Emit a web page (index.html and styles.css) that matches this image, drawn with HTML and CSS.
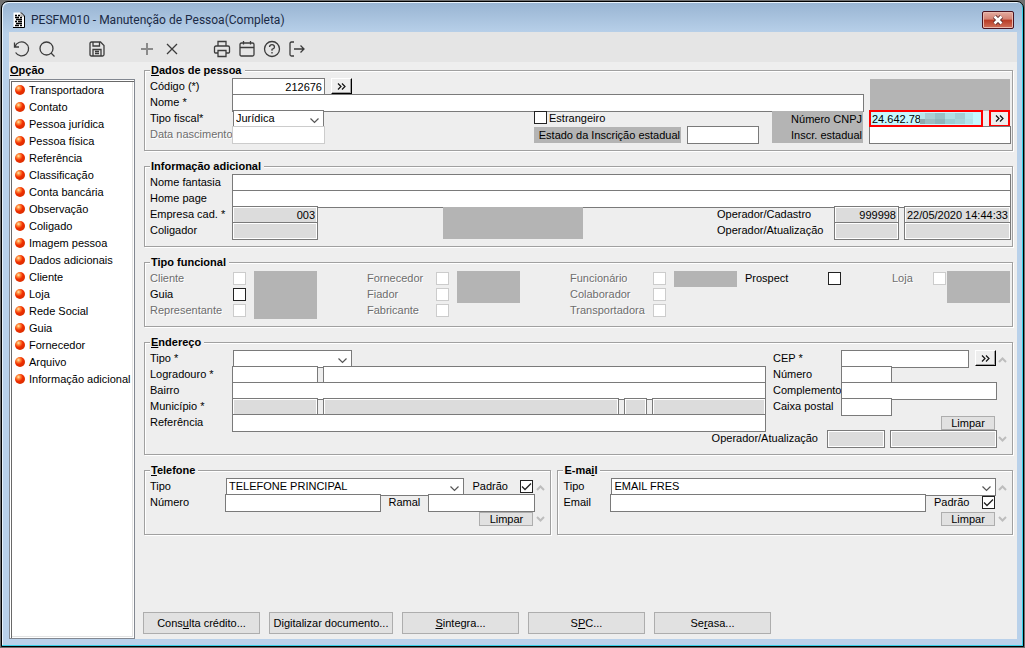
FILE: index.html
```html
<!DOCTYPE html>
<html lang="pt-BR">
<head>
    <meta charset="UTF-8">
    <meta name="viewport" content="width=device-width, initial-scale=1.0">
    <title>PESFM010 - Manutenção de Pessoa(Completa)</title>
    <link rel="stylesheet" href="styles.css">
</head>
<body>
    <div class="window">
        <header class="titlebar">
            <svg class="doc-icon" width="12" height="16" viewBox="0 0 12 16">
                <path d="M0.5 0.5H8L11.5 4V15.5H0.5Z" fill="#fff"/>
                <path d="M8 0.5V4H11.5" fill="none" stroke="#999"/>
                <path d="M0 15.5H11.5V4M8 0.5L11.5 4" fill="none" stroke="#000"/>
                <path d="M2 3.5H4M5 3.5H7M2 5.5H6M7 5.5H9M3 7.5H9M2 9.5H4M5 9.5H9M3 11.5H9M2 13.5H6M7 13.5H9" stroke="#000" stroke-width="1.4"/>
            </svg>
            <h1>PESFM010 - Manutenção de Pessoa(Completa)</h1>
            <button class="close" aria-label="Fechar">
                <svg width="12" height="10" viewBox="0 0 12 10">
                    <path d="M2.5 1.5L9.5 8.5M9.5 1.5L2.5 8.5" stroke="#5b2a2a" stroke-width="4.4"/>
                    <path d="M2.5 1.5L9.5 8.5M9.5 1.5L2.5 8.5" stroke="#fff" stroke-width="2.6"/>
                </svg>
            </button>
        </header>

        <div class="client">
            <nav class="toolbar">
                <button aria-label="Desfazer"><svg viewBox="0 0 18 18"><path d="M1.5 2.5V7H6M2 6.5A7 7 0 1 1 2.6 12.5"/></svg></button>
                <button aria-label="Pesquisar"><svg viewBox="0 0 18 18"><circle cx="8.5" cy="8.5" r="6.5"/><path d="M13 13L16.5 16.5"/></svg></button>
                <button class="space" aria-label="Salvar"><svg viewBox="0 0 18 18"><path d="M2 3.5Q2 2 3.5 2H12.5L16 5.5V14.5Q16 16 14.5 16H3.5Q2 16 2 14.5ZM5 2V6H11.5V2M5 16V9.5H13V16M7 11.5H11M7 13.5H11"/></svg></button>
                <button class="space off" aria-label="Adicionar"><svg viewBox="0 0 18 18"><path d="M9 3V15M3 9H15"/></svg></button>
                <button aria-label="Remover"><svg viewBox="0 0 18 18"><path d="M4 4L14 14M14 4L4 14"/></svg></button>
                <button class="space" aria-label="Imprimir"><svg viewBox="0 0 18 18"><path d="M5 6V1.5H13V6M5 13H2.5Q1.5 13 1.5 12V7.5Q1.5 6 3 6H15Q16.5 6 16.5 7.5V12Q16.5 13 15.5 13H13M5 10.5H13V16.5H5Z"/></svg></button>
                <button aria-label="Agenda"><svg viewBox="0 0 18 18"><path d="M2 4.5Q2 3 3.5 3H14.5Q16 3 16 4.5V14.5Q16 16 14.5 16H3.5Q2 16 2 14.5ZM2 7.5H16M5.5 1V4.5M12.5 1V4.5"/></svg></button>
                <button aria-label="Ajuda"><svg viewBox="0 0 18 18"><circle cx="9" cy="9" r="7.5"/><path d="M6.5 7Q6.8 4.7 9 4.7T11.5 7Q11.5 8.4 9 9.4V10.8M9 12V13.4"/></svg></button>
                <button aria-label="Sair"><svg viewBox="0 0 18 18"><path d="M6 2H3.5Q2 2 2 3.5V14.5Q2 16 3.5 16H6M6 9H16M12.5 5.5L16 9L12.5 12.5"/></svg></button>
            </nav>

            <div class="content">
                <aside class="sidebar">
                    <h2><u>O</u>pção</h2>
                    <ul class="options">
                        <li><a href="#">Transportadora</a></li>
                        <li><a href="#">Contato</a></li>
                        <li><a href="#">Pessoa jurídica</a></li>
                        <li><a href="#">Pessoa física</a></li>
                        <li><a href="#">Referência</a></li>
                        <li><a href="#">Classificação</a></li>
                        <li><a href="#">Conta bancária</a></li>
                        <li><a href="#">Observação</a></li>
                        <li><a href="#">Coligado</a></li>
                        <li><a href="#">Imagem pessoa</a></li>
                        <li><a href="#">Dados adicionais</a></li>
                        <li><a href="#">Cliente</a></li>
                        <li><a href="#">Loja</a></li>
                        <li><a href="#">Rede Social</a></li>
                        <li><a href="#">Guia</a></li>
                        <li><a href="#">Fornecedor</a></li>
                        <li><a href="#">Arquivo</a></li>
                        <li><a href="#">Informação adicional</a></li>
                    </ul>
                </aside>

                <form class="form">
                    <fieldset>
                        <legend><u>D</u>ados de pessoa</legend>
                        <div class="columns">
                            <div class="grow">
                                <div class="row">
                                    <label class="name" for="codigo">Código (*)</label>
                                    <input class="w-code num" id="codigo" value="212676">
                                    <button type="button" class="more" aria-label="Buscar código"><svg width="9" height="7"><path d="M1 0.5L4 3.5L1 6.5M5 0.5L8 3.5L5 6.5"/></svg></button>
                                </div>
                                <div class="row">
                                    <label class="name" for="nome">Nome *</label>
                                    <input class="grow" id="nome">
                                </div>
                                <div class="row">
                                    <label class="name" for="fiscal">Tipo fiscal*</label>
                                    <select class="w-fiscal" id="fiscal"><option>Jurídica</option></select>
                                    <div class="registry">
                                        <input type="checkbox" id="estrangeiro">
                                        <label class="after-check" for="estrangeiro">Estrangeiro</label>
                                        <label class="shade doc-label" for="cnpj">Número CNPJ</label>
                                    </div>
                                </div>
                                <div class="row">
                                    <label class="name off" for="nascimento">Data nascimento</label>
                                    <input class="w-code" id="nascimento" disabled>
                                    <div class="registry">
                                        <label class="shade state-label" for="estado">Estado da Inscrição estadual</label>
                                        <input class="w-state" id="estado">
                                        <label class="shade doc-label" for="inscr">Inscr. estadual</label>
                                    </div>
                                </div>
                            </div>
                            <div class="documents">
                                <div class="block rows-2"></div>
                                <div class="row">
                                    <div class="cnpj">
                                        <input class="marked" id="cnpj" value="24.642.78">
                                        <span class="mosaic"></span>
                                    </div>
                                    <button type="button" class="more marked" aria-label="Buscar CNPJ"><svg width="9" height="7"><path d="M1 0.5L4 3.5L1 6.5M5 0.5L8 3.5L5 6.5"/></svg></button>
                                </div>
                                <div class="row"><input class="grow" id="inscr"></div>
                            </div>
                        </div>
                    </fieldset>

                    <fieldset>
                        <legend>Informação adicional</legend>
                        <div class="row">
                            <label class="name" for="fantasia">Nome fantasia</label>
                            <input class="grow" id="fantasia">
                        </div>
                        <div class="row">
                            <label class="name" for="home">Home page</label>
                            <input class="grow" id="home">
                        </div>
                        <div class="columns">
                            <div>
                                <div class="row">
                                    <label class="name" for="empresa">Empresa cad. *</label>
                                    <input class="w-short num" id="empresa" value="003" readonly>
                                </div>
                                <div class="row">
                                    <label class="name" for="coligador">Coligador</label>
                                    <input class="w-short" id="coligador" readonly>
                                </div>
                            </div>
                            <div class="block rows-2 center-block"></div>
                            <div>
                                <div class="row gap">
                                    <label class="operator" for="opcad">Operador/Cadastro</label>
                                    <input class="w-oper num" id="opcad" value="999998" readonly>
                                    <input class="w-date" aria-label="Data do cadastro" value="22/05/2020 14:44:33" readonly>
                                </div>
                                <div class="row gap">
                                    <label class="operator" for="opatu">Operador/Atualização</label>
                                    <input class="w-oper" id="opatu" readonly>
                                    <input class="w-date" aria-label="Data da atualização" readonly>
                                </div>
                            </div>
                        </div>
                    </fieldset>

                    <fieldset>
                        <legend>Tipo funcional</legend>
                        <div class="roles">
                            <div class="role">
                                <div>
                                    <div class="row"><label class="off" for="r1">Cliente</label><input type="checkbox" id="r1" disabled></div>
                                    <div class="row"><label for="r2">Guia</label><input type="checkbox" id="r2"></div>
                                    <div class="row"><label class="off" for="r3">Representante</label><input type="checkbox" id="r3" disabled></div>
                                </div>
                                <div class="block rows-3"></div>
                            </div>
                            <div class="role medium">
                                <div>
                                    <div class="row"><label class="off" for="r4">Fornecedor</label><input type="checkbox" id="r4" disabled></div>
                                    <div class="row"><label class="off" for="r5">Fiador</label><input type="checkbox" id="r5" disabled></div>
                                    <div class="row"><label class="off" for="r6">Fabricante</label><input type="checkbox" id="r6" disabled></div>
                                </div>
                                <div class="block rows-2"></div>
                            </div>
                            <div class="role">
                                <div>
                                    <div class="row"><label class="off" for="r7">Funcionário</label><input type="checkbox" id="r7" disabled></div>
                                    <div class="row"><label class="off" for="r8">Colaborador</label><input type="checkbox" id="r8" disabled></div>
                                    <div class="row"><label class="off" for="r9">Transportadora</label><input type="checkbox" id="r9" disabled></div>
                                </div>
                                <div class="block rows-1"></div>
                            </div>
                            <div class="role">
                                <div class="row"><label for="r10">Prospect</label><input type="checkbox" id="r10"></div>
                            </div>
                            <div class="role small">
                                <div class="row"><label class="off" for="r11">Loja</label><input type="checkbox" id="r11" disabled></div>
                                <div class="block rows-2"></div>
                            </div>
                        </div>
                    </fieldset>

                    <fieldset>
                        <legend><u>E</u>ndereço</legend>
                        <div class="columns">
                            <div class="grow">
                                <div class="columns address">
                                    <div class="grow">
                                        <div class="row">
                                            <label class="name" for="tipoend">Tipo *</label>
                                            <select class="w-kind" id="tipoend"><option></option></select>
                                        </div>
                                        <div class="row gap">
                                            <label class="name" for="logradouro">Logradouro *</label>
                                            <input class="w-short" id="logradouro">
                                            <input class="grow" aria-label="Nome do logradouro">
                                        </div>
                                        <div class="row">
                                            <label class="name" for="bairro">Bairro</label>
                                            <input class="grow" id="bairro">
                                        </div>
                                        <div class="row gap">
                                            <label class="name" for="municipio">Município *</label>
                                            <input class="w-short" id="municipio" readonly>
                                            <input class="grow" aria-label="Nome do município" readonly>
                                            <input class="w-uf" aria-label="UF" readonly>
                                            <input class="w-country" aria-label="País" readonly>
                                        </div>
                                        <div class="row">
                                            <label class="name" for="referencia">Referência</label>
                                            <input class="grow" id="referencia">
                                        </div>
                                    </div>
                                    <div class="postal">
                                        <div class="row">
                                            <label for="cep">CEP *</label>
                                            <input class="w-cep" id="cep">
                                            <button type="button" class="more" aria-label="Buscar CEP"><svg width="9" height="7"><path d="M1 0.5L4 3.5L1 6.5M5 0.5L8 3.5L5 6.5"/></svg></button>
                                        </div>
                                        <div class="row"><label for="numero">Número</label><input class="w-number" id="numero"></div>
                                        <div class="row"><label for="complemento">Complemento</label><input class="grow" id="complemento"></div>
                                        <div class="row"><label for="caixa">Caixa postal</label><input class="w-number" id="caixa"></div>
                                        <div class="row end"><button type="button" class="clear">Limpar</button></div>
                                    </div>
                                </div>
                                <div class="row gap end">
                                    <label class="updated" for="opend">Operador/Atualização</label>
                                    <input class="w-oper-end" id="opend" readonly>
                                    <input class="w-date" aria-label="Data da atualização do endereço" readonly>
                                </div>
                            </div>
                            <div class="scroll">
                                <svg width="9" height="6"><path d="M1 5L4.5 1.5L8 5"/></svg>
                                <svg width="9" height="6"><path d="M1 1L4.5 4.5L8 1"/></svg>
                            </div>
                        </div>
                    </fieldset>

                    <div class="contacts">
                        <fieldset class="phone">
                            <legend><u>T</u>elefone</legend>
                            <div class="columns">
                                <div class="grow">
                                    <div class="row">
                                        <label class="name" for="tipotel">Tipo</label>
                                        <select class="grow" id="tipotel"><option>TELEFONE PRINCIPAL</option></select>
                                        <label class="default" for="padtel">Padrão</label>
                                        <input type="checkbox" id="padtel" checked>
                                    </div>
                                    <div class="row">
                                        <label class="name" for="numtel">Número</label>
                                        <input class="grow" id="numtel">
                                        <label class="extension" for="ramal">Ramal</label>
                                        <input class="w-date" id="ramal">
                                    </div>
                                    <div class="row end"><button type="button" class="clear">Limpar</button></div>
                                </div>
                                <div class="scroll">
                                    <svg width="9" height="6"><path d="M1 5L4.5 1.5L8 5"/></svg>
                                    <svg width="9" height="6"><path d="M1 1L4.5 4.5L8 1"/></svg>
                                </div>
                            </div>
                        </fieldset>

                        <fieldset class="email">
                            <legend>E-ma<u>i</u>l</legend>
                            <div class="columns">
                                <div class="grow">
                                    <div class="row">
                                        <label class="name" for="tipomail">Tipo</label>
                                        <select class="grow" id="tipomail"><option>EMAIL FRES</option></select>
                                    </div>
                                    <div class="row">
                                        <label class="name" for="email">Email</label>
                                        <input class="grow" id="email">
                                        <label class="default" for="padmail">Padrão</label>
                                        <input type="checkbox" id="padmail" checked>
                                    </div>
                                    <div class="row end"><button type="button" class="clear">Limpar</button></div>
                                </div>
                                <div class="scroll">
                                    <svg width="9" height="6"><path d="M1 5L4.5 1.5L8 5"/></svg>
                                    <svg width="9" height="6"><path d="M1 1L4.5 4.5L8 1"/></svg>
                                </div>
                            </div>
                        </fieldset>
                    </div>

                    <div class="actions">
                        <button type="button">Cons<u>u</u>lta crédito...</button>
                        <button type="button" class="wide">Di<u>g</u>italizar documento...</button>
                        <button type="button"><u>S</u>integra...</button>
                        <button type="button">S<u>P</u>C...</button>
                        <button type="button">Se<u>r</u>asa...</button>
                    </div>
                </form>
            </div>
        </div>
    </div>
</body>
</html>
```

FILE: styles.css
```css
* {
    margin: 0;
    padding: 0;
    box-sizing: border-box;
}
body {
    min-height: 100vh;
    display: flex;
    padding: 1px;
    background: #6f6f6f;
    font-family: "Liberation Sans", Arial, sans-serif;
    font-size: 11px;
    line-height: 14px;
    color: #000;
}
input, select, button {
    font: inherit;
    color: inherit;
}
svg {
    display: block;
    flex: none;
    fill: none;
}

/* window frame */
.window {
    flex: 1;
    display: flex;
    flex-direction: column;
    padding: 0 6px 7px 7px;
    border: 1px solid #000;
    border-radius: 7px 7px 0 0;
    background: linear-gradient(#98b4d2, #b9d1ea 32px, #b9d1ea);
    box-shadow: inset -1px -1px 0 #35d0e8, inset 1px 1px 0 #e8f2fb;
}
.titlebar {
    display: flex;
    align-items: center;
    height: 30px;
    padding: 6px 3px 0 4px;
}
.titlebar h1 {
    margin-left: 6px;
    font-family: Roboto, sans-serif;
    font-size: 12px;
    font-weight: normal;
    line-height: 16px;
    color: #1b2a45;
}
.close {
    display: flex;
    align-items: center;
    justify-content: center;
    width: 32px;
    height: 18px;
    margin-left: auto;
    border: 1px solid #4b1420;
    border-radius: 2px;
    background: linear-gradient(#e3aca0, #d38273 45%, #b83a24 50%, #d0705a);
    box-shadow: inset 0 0 0 1px #e9b9ae;
}
.client {
    flex: 1;
    display: flex;
    flex-direction: column;
    background: #eee;
}
.toolbar {
    display: flex;
    align-items: center;
    height: 30px;
    padding: 4px 0 0 4px;
    gap: 7px;
    background: #e5e5e5;
}
.toolbar button {
    width: 18px;
    height: 18px;
    border: none;
    background: none;
}
.toolbar .space {
    margin-left: 25px;
}
.toolbar svg {
    width: 18px;
    height: 18px;
    stroke: #3c3c3c;
    stroke-width: 1.3;
}
.toolbar .off svg {
    stroke: #8a8a8a;
    stroke-width: 2;
}
.content {
    flex: 1;
    display: flex;
    gap: 8px;
}

/* option list */
.sidebar {
    display: flex;
    flex-direction: column;
    width: 126px;
}
.sidebar h2 {
    margin-bottom: 1px;
    padding-left: 1px;
    font-size: 11px;
    line-height: 16px;
}
.options {
    flex: 1;
    padding: 1px 0 0 2px;
    border: 1px solid #828790;
    background: #fff;
    box-shadow: inset 1px 1px 0 #fff, inset 2px 2px 0 #696969, inset -1px -1px 0 #fff, inset -2px -2px 0 #e3e3e3;
    list-style: none;
    white-space: nowrap;
}
.options a {
    display: flex;
    align-items: center;
    height: 17px;
    padding-left: 3px;
    color: #000;
    text-decoration: none;
}
.options a::before {
    content: "";
    width: 10px;
    height: 10px;
    margin-right: 4px;
    border-radius: 50%;
    background: radial-gradient(circle at 35% 30%, #ffe9b0, #ff8a3a 20%, #f02d00 45%, #c83000);
}

/* groups */
.form {
    flex: 1;
    min-width: 0;
    display: flex;
    flex-direction: column;
    padding: 0 4px 5px 0;
}
fieldset {
    min-width: 0;
    margin: 0 0 7px 1px;
    padding: 0 1px 8px 5px;
    border: 1px solid #a0a0a0;
    box-shadow: 1px 1px 0 #fff, inset 1px 1px 0 #fff;
}
legend {
    height: 16px;
    padding: 0 3px 0 1px;
    background: #eee;
    font-weight: bold;
    line-height: 16px;
}
.columns {
    display: flex;
}
.grow {
    flex: 1;
    min-width: 0;
}
.row {
    display: flex;
    height: 16px;
    white-space: nowrap;
}
.gap {
    gap: 5px;
}
.end {
    justify-content: flex-end;
}
label {
    line-height: 16px;
}
.name {
    flex: none;
    width: 82px;
}
.gap .name {
    margin-right: -5px;
}
label.off {
    color: #6d6d6d;
    text-shadow: 1px 1px 0 #fff;
}

/* fields */
input {
    flex: none;
    height: 18px;
    padding: 0 2px;
    border: 1px solid #7a7a7a;
    border-radius: 0;
    background: #fff;
}
input.grow {
    flex: 1;
}
input:disabled {
    border-color: #ccc;
}
input:read-only:not([type="checkbox"]):not(:disabled) {
    background: #dcdcdc;
    box-shadow: inset 0 0 0 1px #fff;
}
.num {
    text-align: right;
}
select {
    height: 18px;
    margin-left: 1px;
    padding: 0 14px 2px 2px;
    appearance: none;
    border: 1px solid #7a7a7a;
    border-radius: 0;
    background: #fff url("data:image/svg+xml,%3Csvg xmlns='http://www.w3.org/2000/svg' width='9' height='6'%3E%3Cpath d='M0.5 0.5L4.5 4.5L8.5 0.5' fill='none' stroke='%23555' stroke-width='1.2'/%3E%3C/svg%3E") no-repeat right 4px top 7px;
}
input[type="checkbox"] {
    width: 13px;
    height: 13px;
    margin-top: 1px;
    appearance: none;
    border: 1px solid #222;
}
input[type="checkbox"]:disabled {
    border-color: #ccc;
}
input[type="checkbox"]:checked {
    background: #fff url("data:image/svg+xml,%3Csvg xmlns='http://www.w3.org/2000/svg' width='11' height='11'%3E%3Cpath d='M1 5.5L4 8.5L10 2.5' fill='none' stroke='%23222' stroke-width='1.3'/%3E%3C/svg%3E") no-repeat;
}
.w-code { width: 93px; }
.w-fiscal { width: 91px; }
.w-state { width: 72px; }
.w-short { width: 86px; }
.w-oper { width: 65px; }
.w-oper-end { width: 58px; }
.w-date { width: 107px; }
.w-kind { width: 119px; }
.w-uf { width: 23px; }
.w-country { width: 114px; }
.w-cep { width: 128px; }
.w-number { width: 51px; }

.more {
    display: flex;
    align-items: center;
    justify-content: center;
    width: 21px;
    height: 16px;
    margin-left: 6px;
    border: 1px solid #fff;
    border-right-color: #000;
    border-bottom-color: #000;
    background: #eee;
    box-shadow: inset -1px -1px 0 #a0a0a0;
}
.more svg {
    stroke: #111;
    stroke-width: 1.2;
}
.clear {
    width: 54px;
    height: 14px;
    margin: 2px 2px 0 0;
    border: 1px solid #adadad;
    background: #e1e1e1;
    line-height: 12px;
}
.block {
    flex: none;
    margin: 1px 0 -1px;
    background: #b4b4b4;
}
.rows-1 { height: 16px; }
.rows-2 { height: 32px; }
.rows-3 { height: 48px; }

/* registry fields */
.registry {
    display: flex;
    width: 330px;
    margin-left: auto;
}
.after-check {
    padding-left: 2px;
}
.shade {
    height: 16px;
    margin-top: 1px;
    padding-right: 1px;
    background: #b4b4b4;
    text-align: right;
}
.state-label {
    width: 147px;
    margin-right: 6px;
}
.doc-label {
    width: 91px;
    margin: 1px 1px 0 auto;
}
.documents {
    width: 142px;
    margin-left: 5px;
}
.documents .block {
    margin: 1px 1px -1px;
}
.cnpj {
    position: relative;
}
.cnpj input {
    width: 114px;
    padding: 0 1px;
    background: #c5f8ff;
}
input.marked, .more.marked {
    height: 17px;
    border: 2px solid #f00;
    box-shadow: none;
}
.mosaic {
    position: absolute;
    top: 3px;
    left: 51px;
    width: 53px;
    height: 11px;
    background:
        linear-gradient(90deg, #8fa9ae 5px, #9cbcc2 5px 15px, #8fb4bb 15px 25px, #9ccdd4 25px 35px, #a5d4db 35px 45px, #b2e4ec 45px) 0 6px / 100% 5px no-repeat,
        linear-gradient(90deg, #b9e6ec 5px, #a9cdd3 5px 15px, #98bfc6 15px 25px, #b0dde4 25px 35px, #a3ced5 35px 45px, #b6e9f0 45px);
}
.center-block {
    width: 140px;
    margin-left: 125px;
    margin-right: auto;
}
.operator {
    width: 112px;
}

/* roles */
.roles {
    display: grid;
    grid-template-columns: 217fr 203fr 175fr 147fr 119fr;
}
.role {
    display: flex;
    gap: 8px;
}
.role label {
    width: 83px;
}
.role input[type="checkbox"] {
    margin-top: 2px;
}
.role .block {
    width: 63px;
}
.role.medium label {
    width: 69px;
}
.role.small {
    gap: 1px;
}
.role.small label {
    width: 41px;
}

/* address and contacts */
.address {
    gap: 7px;
}
.postal {
    width: 224px;
}
.postal label {
    width: 68px;
}
.updated {
    margin-right: 4px;
}
.scroll {
    display: flex;
    flex-direction: column;
    justify-content: space-between;
    align-items: center;
    width: 14px;
    padding: 7px 3px 4px 0;
}
.scroll svg {
    stroke: #bdbdbd;
    stroke-width: 2;
}
.contacts {
    display: flex;
    gap: 5px;
}
.phone {
    flex: 407;
}
.email {
    flex: 456;
}
.phone .name {
    width: 75px;
}
.email .name {
    width: 47px;
}
.email select {
    margin-right: 1px;
}
.default {
    width: 48px;
    margin-left: 8px;
}
.contacts input[type="checkbox"] {
    margin: 2px 2px 0 0;
}
.extension {
    width: 40px;
    margin-left: 7px;
}
.actions {
    display: flex;
    gap: 9px;
    margin-top: auto;
}
.actions button {
    width: 117px;
    height: 22px;
    border: 1px solid #adadad;
    background: #e1e1e1;
}
.actions .wide {
    width: 124px;
}
```
